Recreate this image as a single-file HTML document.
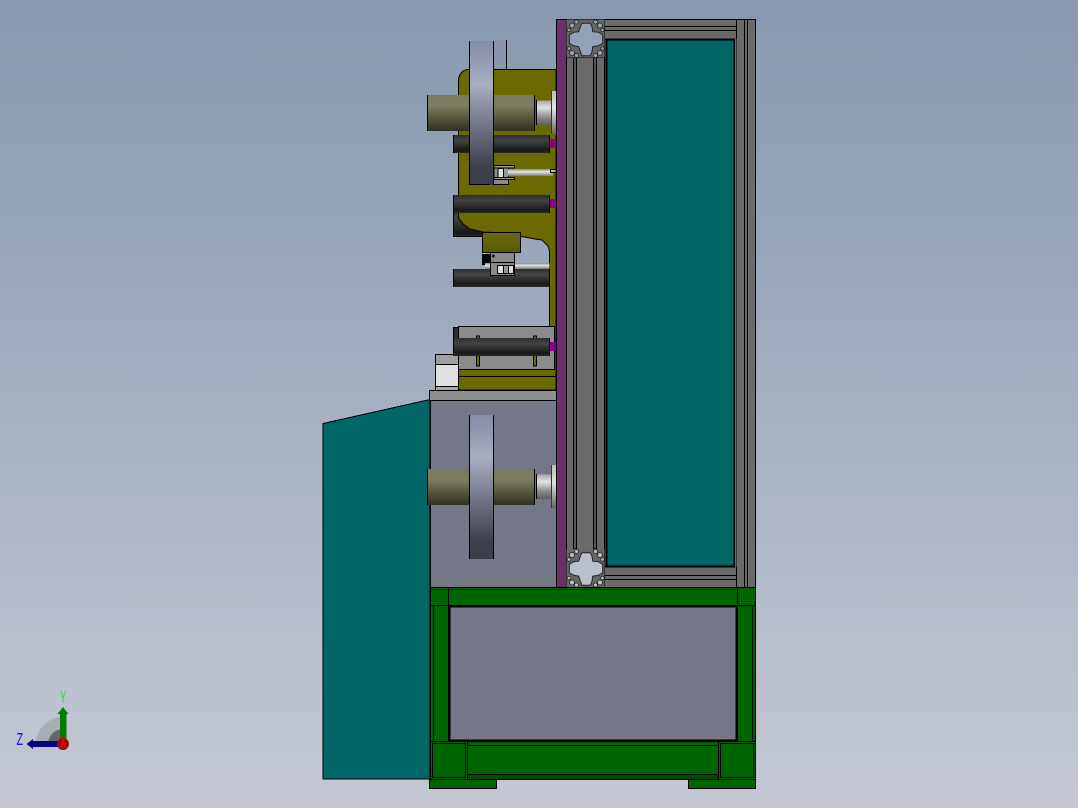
<!DOCTYPE html>
<html>
<head>
<meta charset="utf-8">
<style>
html,body{margin:0;padding:0;width:1078px;height:808px;overflow:hidden;background:#a6b0c1}
svg{display:block}
text{font-family:"Liberation Sans",sans-serif}
</style>
</head>
<body>
<svg width="1078" height="808" viewBox="0 0 1078 808" xmlns="http://www.w3.org/2000/svg">
<defs>
<linearGradient id="bg" x1="0" y1="0" x2="0" y2="1"><stop offset="0" stop-color="#8798ae"/><stop offset="1" stop-color="#c4c8d4"/></linearGradient>
<linearGradient id="wheel" x1="0" y1="0" x2="0" y2="1"><stop offset="0" stop-color="#858da3"/><stop offset=".3" stop-color="#a9aec2"/><stop offset=".62" stop-color="#6b6f80"/><stop offset=".88" stop-color="#3d404a"/><stop offset="1" stop-color="#3b3e48"/></linearGradient>
<linearGradient id="shaft" x1="0" y1="0" x2="0" y2="1"><stop offset="0" stop-color="#7a7a5e"/><stop offset=".3" stop-color="#7d7d60"/><stop offset=".65" stop-color="#55553f"/><stop offset="1" stop-color="#2f2f24"/></linearGradient>
<linearGradient id="cyl" x1="0" y1="0" x2="0" y2="1"><stop offset="0" stop-color="#a8a8a8"/><stop offset=".3" stop-color="#e2e2e2"/><stop offset=".7" stop-color="#888"/><stop offset="1" stop-color="#5c5c5c"/></linearGradient>
<linearGradient id="fl" x1="0" y1="0" x2="0" y2="1"><stop offset="0" stop-color="#bbb"/><stop offset=".4" stop-color="#e4e4e4"/><stop offset="1" stop-color="#666"/></linearGradient>
<linearGradient id="roll" x1="0" y1="0" x2="0" y2="1"><stop offset="0" stop-color="#2e2e2e"/><stop offset=".3" stop-color="#444"/><stop offset=".85" stop-color="#191919"/><stop offset="1" stop-color="#2a2a2a"/></linearGradient>
<linearGradient id="rod" x1="0" y1="0" x2="0" y2="1"><stop offset="0" stop-color="#888"/><stop offset=".4" stop-color="#e6e6e6"/><stop offset="1" stop-color="#777"/></linearGradient>
<linearGradient id="oc" x1="0" y1="0" x2="0" y2="1"><stop offset="0" stop-color="#6a6a10"/><stop offset="1" stop-color="#5a5a00"/></linearGradient>
<g id="slot">
 <rect width="38" height="38" fill="#666"/>
 <path d="M13.800 7.200L15.500 3.800H23.800L25.500 7.200L26.200 12.200L32.200 12.800L36.200 15.500V23.800L32.200 26.200L26.200 27.200L25.500 32.200L23.800 36.200H15.500L13.800 32.200L12.200 27.200L7.200 26.200L2.800 23.800V15.500L7.200 12.800L12.200 12.200Z" fill="currentColor" stroke="#222" stroke-width="1"/>
 <g fill="currentColor" stroke="#222" stroke-width=".8">
  <circle cx="5.500" cy="6" r="2.500"/><circle cx="33.500" cy="6" r="2.500"/><circle cx="5.500" cy="33.500" r="2.500"/><circle cx="33.500" cy="33.500" r="2.500"/>
  <circle cx="10" cy="2.500" r="2"/><circle cx="29" cy="2.500" r="2"/><circle cx="10" cy="36" r="2"/><circle cx="29" cy="36" r="2"/>
  <circle cx="2.500" cy="10.500" r="1.800"/><circle cx="36" cy="10.500" r="1.800"/><circle cx="2.500" cy="29" r="1.800"/><circle cx="36" cy="29" r="1.800"/>
 </g>
</g>
</defs>
<rect width="1078" height="808" fill="url(#bg)"/>

<g shape-rendering="crispEdges" stroke="#000" stroke-width="1">
<!-- back rect behind upper wheel -->
<rect x="493" y="40" width="13.500" height="30" fill="#8b94ab" stroke="none"/>
<line x1="506.500" y1="40" x2="506.500" y2="70"/>

<!-- rear dark roller stubs -->
<rect x="453.500" y="210.500" width="30" height="26" fill="url(#roll)"/>
<rect x="453.500" y="327.500" width="6" height="12" fill="#2c2c2c"/>

<!-- olive body -->
<path d="M467 69.500H556V390H458.500V369H549.500V251L548 246L542 240L535 239L503 233L483 232L470 229L463 224L458.500 218V80Q459 72 467 69.500Z" fill="#6a6a00" shape-rendering="auto"/>
<line x1="459" y1="376.500" x2="556" y2="376.500"/>
<rect x="482.500" y="232.500" width="38" height="20" fill="url(#oc)"/>

<!-- bolt plate -->
<rect x="458.500" y="326.500" width="96" height="43" fill="#8b8b8b"/>
<rect x="476.500" y="336" width="3" height="30" fill="#6a6a00"/>
<rect x="533.500" y="336" width="3" height="30" fill="#6a6a00"/>

<!-- small motor block -->
<rect x="435.500" y="354.500" width="23" height="36" fill="#e0e0e0"/>
<rect x="435.500" y="354.500" width="23" height="10" fill="#a0a0a0"/>
<rect x="435.500" y="386.500" width="23" height="4" fill="#a8a8a8"/>

<!-- rollers -->
<g stroke="none">
<rect x="453" y="135" width="97" height="18" fill="url(#roll)"/>
<rect x="453" y="195" width="97" height="18" fill="url(#roll)"/>
<rect x="453" y="269" width="97" height="18" fill="url(#roll)"/>
<rect x="453" y="338" width="97" height="18" fill="url(#roll)"/>
</g>
<g>
<line x1="453.500" y1="135" x2="453.500" y2="153"/><line x1="549.500" y1="135" x2="549.500" y2="153"/>
<line x1="453.500" y1="195" x2="453.500" y2="213"/><line x1="549.500" y1="195" x2="549.500" y2="213"/>
<line x1="453.500" y1="269" x2="453.500" y2="287"/><line x1="549.500" y1="269" x2="549.500" y2="287"/>
<line x1="453.500" y1="338" x2="453.500" y2="356"/><line x1="549.500" y1="338" x2="549.500" y2="356"/>
</g>
<g fill="#8a008a" stroke="none">
<rect x="550" y="139" width="6" height="9"/>
<rect x="550" y="199" width="6" height="9"/>
<rect x="550" y="342" width="6" height="9"/>
</g>

<!-- upper cylinder assembly -->
<rect x="427" y="95" width="108" height="36" fill="url(#shaft)" stroke="none"/>
<line x1="427.500" y1="95" x2="427.500" y2="131"/><line x1="534.500" y1="95" x2="534.500" y2="131"/>
<rect x="536" y="100.500" width="15" height="24.500" fill="url(#cyl)" stroke="none"/>
<line x1="536.500" y1="100" x2="536.500" y2="125"/>
<rect x="551" y="91" width="5" height="43" fill="url(#fl)" stroke="none"/>
<line x1="551.500" y1="91" x2="551.500" y2="134" stroke="#333"/>

<!-- upper clevis -->
<rect x="493.500" y="179.500" width="15" height="5" fill="#8b8b8b"/>
<rect x="494" y="165.500" width="4.500" height="14" fill="#8b8b8b"/>
<rect x="498" y="168.500" width="10" height="9" fill="#ddd"/>
<rect x="503.500" y="168" width="5" height="10" fill="#999"/>
<rect x="508" y="169" width="45" height="7" fill="url(#rod)" stroke="none"/>
<rect x="494" y="165.500" width="20.500" height="2.500" fill="#999"/>
<rect x="494" y="177.500" width="20.500" height="2" fill="#999"/>
<rect x="550.500" y="169.500" width="5.500" height="3" fill="#bbb"/>

<!-- upper wheel -->
<rect x="469" y="41" width="25" height="144" fill="url(#wheel)" stroke="none"/>
<line x1="469.500" y1="41" x2="469.500" y2="185"/><line x1="493.500" y1="41" x2="493.500" y2="185"/>
<line x1="469" y1="184.500" x2="490" y2="184.500"/>

<!-- lower clamp -->
<rect x="482" y="254" width="8" height="11" fill="#000" stroke="none"/>
<rect x="485" y="263" width="64.500" height="6" fill="url(#rod)" stroke="none"/>
<rect x="490.500" y="252.500" width="24" height="23" fill="#8b8b8b"/>
<line x1="490" y1="262.500" x2="515" y2="262.500"/>
<rect x="497.500" y="265.500" width="16" height="8" fill="#ddd"/>
<rect x="503.500" y="265.500" width="5" height="8" fill="#999"/>
<path d="M493 254L495 256L493 258L491 256Z" fill="#222" stroke="none"/>

<!-- teal door -->
<polygon points="323,423.500 430,399.500 430,779 323,779" fill="#006666"/>

<!-- base top -->
<rect x="429.500" y="390.500" width="127" height="10" fill="#8e8e8e"/>
<!-- lower box -->
<rect x="430.500" y="400.500" width="126" height="187" fill="#757888"/>
<rect x="427" y="469" width="108" height="36" fill="url(#shaft)" stroke="none"/>
<line x1="427.500" y1="469" x2="427.500" y2="505"/><line x1="534.500" y1="469" x2="534.500" y2="505"/>
<rect x="536" y="474.500" width="15" height="24.500" fill="url(#cyl)" stroke="none"/>
<line x1="536.500" y1="474" x2="536.500" y2="499"/>
<rect x="551" y="465" width="5" height="43" fill="url(#fl)" stroke="none"/>
<line x1="551.500" y1="465" x2="551.500" y2="508" stroke="#333"/>
<rect x="469" y="415" width="25" height="144" fill="url(#wheel)" stroke="none"/>
<line x1="469.500" y1="415" x2="469.500" y2="559"/><line x1="493.500" y1="415" x2="493.500" y2="559"/>

<!-- purple plate -->
<rect x="556.500" y="19.500" width="10" height="568" fill="#6b2f6b"/>

<!-- vertical extrusion -->
<rect x="566.500" y="19.500" width="38" height="568" fill="#6a6a6a"/>
<rect x="573.500" y="57" width="3" height="492" fill="#555"/>
<rect x="593.500" y="57" width="3" height="492" fill="#555"/>
<line x1="573.500" y1="57" x2="573.500" y2="549"/>
<line x1="576.500" y1="57" x2="576.500" y2="549"/>
<line x1="593.500" y1="57" x2="593.500" y2="549"/>
<line x1="596.500" y1="57" x2="596.500" y2="549"/>
<line x1="566" y1="57.500" x2="604" y2="57.500"/>

<!-- top / bottom rails -->
<rect x="604.500" y="19.500" width="132" height="20" fill="#6a6a6a"/>
<line x1="604" y1="26.500" x2="736" y2="26.500"/>
<line x1="604" y1="30.500" x2="736" y2="30.500"/>
<rect x="604.500" y="566.500" width="132" height="21" fill="#6a6a6a"/>
<line x1="604" y1="575.500" x2="736" y2="575.500"/>
<line x1="604" y1="579.500" x2="736" y2="579.500"/>

<!-- right column -->
<rect x="736.500" y="19.500" width="19" height="568" fill="#6a6a6a"/>
<line x1="744.500" y1="19" x2="744.500" y2="587"/>
<line x1="747.500" y1="19" x2="747.500" y2="587"/>

<!-- teal panel -->
<rect x="604.500" y="39.500" width="2" height="527" fill="#6a6a6a"/>
<rect x="606.500" y="39.500" width="128" height="527" fill="#006666" stroke-width="2"/>
<rect x="735" y="39" width="1.500" height="528" fill="#6a6a6a" stroke="none"/>

<!-- green frame -->
<rect x="430.500" y="605.500" width="18" height="136" fill="#006400"/>
<rect x="737.500" y="605.500" width="18" height="136" fill="#006400"/>
<line x1="433.500" y1="606" x2="433.500" y2="741"/>
<line x1="752.500" y1="606" x2="752.500" y2="741"/>
<rect x="449.500" y="606.500" width="287" height="134" fill="#757888" stroke-width="2"/>
<rect x="430.500" y="587.500" width="325" height="18" fill="#006400"/>
<line x1="431" y1="589.500" x2="737" y2="589.500" stroke="#004a00"/>
<line x1="448.500" y1="588" x2="448.500" y2="605"/>
<line x1="737.500" y1="588" x2="737.500" y2="605"/>

<!-- green base -->
<rect x="467.500" y="741.500" width="251" height="38" fill="#006400"/>
<line x1="468" y1="745.500" x2="718" y2="745.500"/>
<line x1="468" y1="774.500" x2="718" y2="774.500"/>
<rect x="468" y="775" width="250" height="4" fill="#004d00" stroke="none"/>
<rect x="430.500" y="741.500" width="37" height="38" fill="#006400"/>
<rect x="432.500" y="743.500" width="33" height="34" fill="none"/>
<rect x="718.500" y="741.500" width="37" height="38" fill="#006400"/>
<rect x="720.500" y="743.500" width="33" height="34" fill="none"/>
<rect x="429.500" y="779.500" width="67" height="9" fill="#006400"/>
<rect x="688.500" y="779.500" width="67" height="9" fill="#006400"/>
</g>

<!-- T-slot ends -->
<use href="#slot" x="566.500" y="19.500" color="#93a2b6"/>
<use href="#slot" x="566.500" y="549" color="#b9bfcd"/>

<!-- triad -->
<path d="M63 744V717A27 27 0 0 0 36 744Z" fill="#a9adb5"/>
<path d="M63 744V729A15 15 0 0 0 48 744Z" fill="#66686e"/>
<rect x="60" y="713" width="6.500" height="29" fill="#067a06"/>
<path d="M63 707L68.500 714H57.500Z" fill="#067a06"/>
<rect x="33" y="741" width="27" height="6" fill="#06067e"/>
<path d="M26.500 744L33 739V749Z" fill="#06067e"/>
<circle cx="63" cy="744" r="6" fill="#9c0a0a"/>
<path d="M60 735L66 748M66 735L60 748" stroke="#e01010" stroke-width="1" fill="none"/>
<text transform="translate(60 702.500) scale(.55 1)" font-size="17" fill="#22e022">Y</text>
<text transform="translate(16.500 745) scale(.6 1)" font-size="18" fill="#1010ee">Z</text>
</svg>
</body>
</html>
